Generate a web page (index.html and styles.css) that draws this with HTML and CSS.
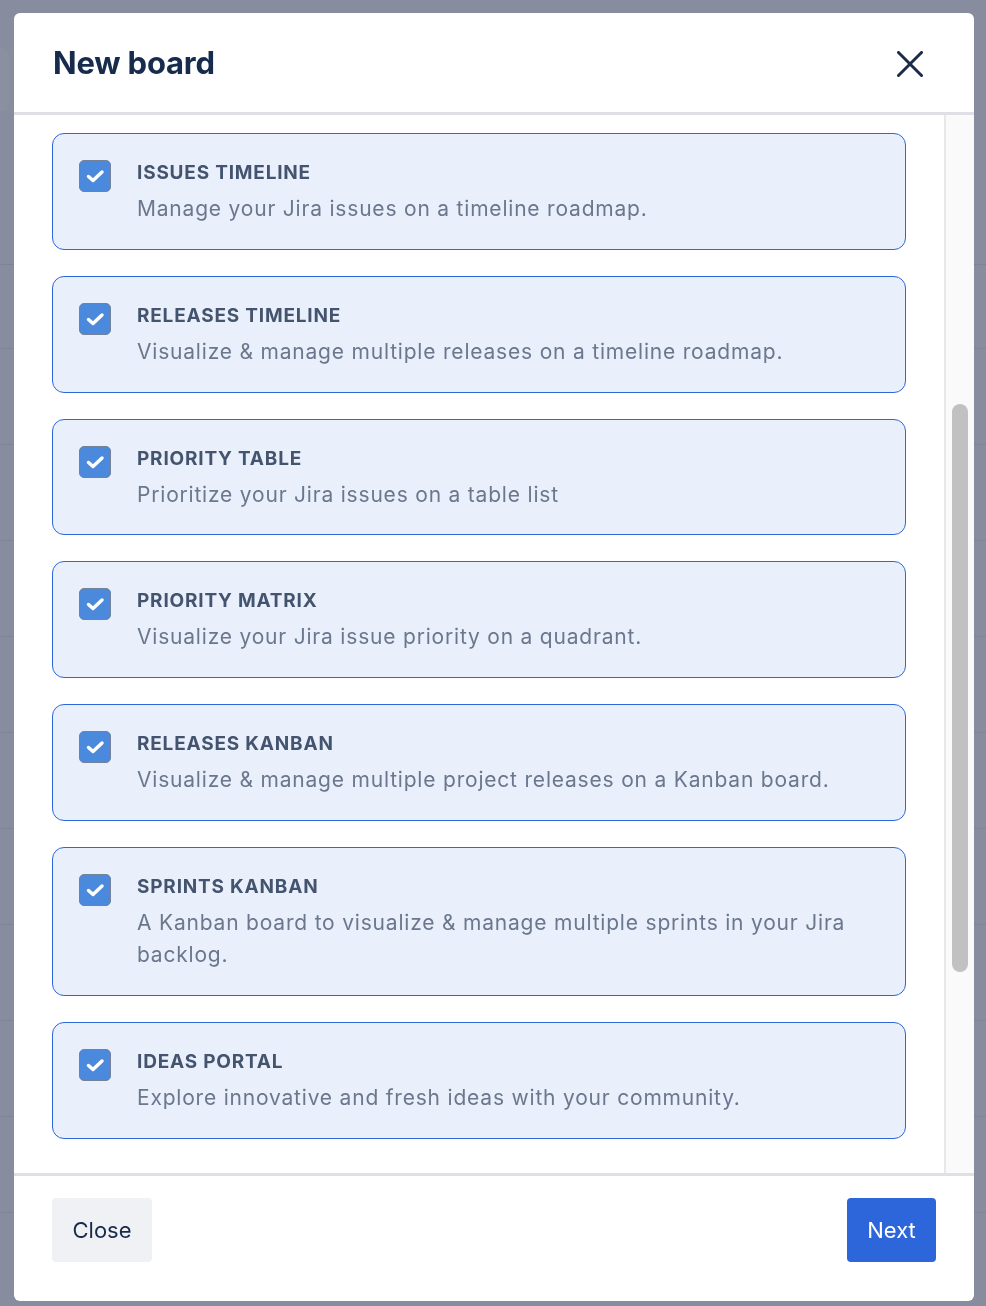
FILE: index.html
```html
<!DOCTYPE html>
<html lang="en">
<head>
  <meta charset="UTF-8">
  <title>New board</title>
  <link rel="stylesheet" href="styles.css">
</head>
<body>
  <div class="bg-page">
    <div class="bg-tab"></div>
    <div class="bg-rows">
      <div class="bg-row first"></div>
      <div class="bg-row short"></div>
      <div class="bg-row"></div>
      <div class="bg-row"></div>
      <div class="bg-row"></div>
      <div class="bg-row"></div>
      <div class="bg-row"></div>
      <div class="bg-row"></div>
      <div class="bg-row"></div>
      <div class="bg-row"></div>
      <div class="bg-row"></div>
    </div>
  </div>

  <div class="overlay">
    <div class="modal">
      <div class="modal-header">
        <h1>New board</h1>
        <button class="icon-btn" aria-label="Close">
          <svg width="26" height="26" viewBox="0 0 26 26"><path d="M1.5 1.5 L24.5 24.5 M24.5 1.5 L1.5 24.5" stroke="#1c2a4c" stroke-width="3" stroke-linecap="round" fill="none"/></svg>
        </button>
      </div>

      <div class="modal-body">
        <div class="card-list">
          <label class="card">
            <span class="check"><svg width="32" height="32" viewBox="0 0 32 32"><path d="M9.5 16.5 L14 20.5 L23 12" stroke="#fff" stroke-width="3.5" stroke-linecap="round" stroke-linejoin="round" fill="none"/></svg></span>
            <span class="card-text">
              <span class="card-title">Issues timeline</span>
              <span class="card-desc">Manage your Jira issues on a timeline roadmap.</span>
            </span>
          </label>
          <label class="card">
            <span class="check"><svg width="32" height="32" viewBox="0 0 32 32"><path d="M9.5 16.5 L14 20.5 L23 12" stroke="#fff" stroke-width="3.5" stroke-linecap="round" stroke-linejoin="round" fill="none"/></svg></span>
            <span class="card-text">
              <span class="card-title">Releases timeline</span>
              <span class="card-desc">Visualize &amp; manage multiple releases on a timeline roadmap.</span>
            </span>
          </label>
          <label class="card">
            <span class="check"><svg width="32" height="32" viewBox="0 0 32 32"><path d="M9.5 16.5 L14 20.5 L23 12" stroke="#fff" stroke-width="3.5" stroke-linecap="round" stroke-linejoin="round" fill="none"/></svg></span>
            <span class="card-text">
              <span class="card-title">Priority table</span>
              <span class="card-desc">Prioritize your Jira issues on a table list</span>
            </span>
          </label>
          <label class="card">
            <span class="check"><svg width="32" height="32" viewBox="0 0 32 32"><path d="M9.5 16.5 L14 20.5 L23 12" stroke="#fff" stroke-width="3.5" stroke-linecap="round" stroke-linejoin="round" fill="none"/></svg></span>
            <span class="card-text">
              <span class="card-title">Priority matrix</span>
              <span class="card-desc">Visualize your Jira issue priority on a quadrant.</span>
            </span>
          </label>
          <label class="card">
            <span class="check"><svg width="32" height="32" viewBox="0 0 32 32"><path d="M9.5 16.5 L14 20.5 L23 12" stroke="#fff" stroke-width="3.5" stroke-linecap="round" stroke-linejoin="round" fill="none"/></svg></span>
            <span class="card-text">
              <span class="card-title">Releases kanban</span>
              <span class="card-desc">Visualize &amp; manage multiple project releases on a Kanban board.</span>
            </span>
          </label>
          <label class="card">
            <span class="check"><svg width="32" height="32" viewBox="0 0 32 32"><path d="M9.5 16.5 L14 20.5 L23 12" stroke="#fff" stroke-width="3.5" stroke-linecap="round" stroke-linejoin="round" fill="none"/></svg></span>
            <span class="card-text">
              <span class="card-title">Sprints kanban</span>
              <span class="card-desc">A Kanban board to visualize &amp; manage multiple sprints in your Jira backlog.</span>
            </span>
          </label>
          <label class="card">
            <span class="check"><svg width="32" height="32" viewBox="0 0 32 32"><path d="M9.5 16.5 L14 20.5 L23 12" stroke="#fff" stroke-width="3.5" stroke-linecap="round" stroke-linejoin="round" fill="none"/></svg></span>
            <span class="card-text">
              <span class="card-title">Ideas portal</span>
              <span class="card-desc">Explore innovative and fresh ideas with your community.</span>
            </span>
          </label>
        </div>
        <div class="scroll-track">
          <div class="scroll-thumb"></div>
        </div>
      </div>

      <div class="modal-footer">
        <button class="btn btn-subtle">Close</button>
        <button class="btn btn-primary">Next</button>
      </div>
    </div>
  </div>
</body>
</html>
```

FILE: styles.css
```css
body { margin: 0; background: #878d9e; font-family: Inter, 'Noto Sans', Arial, sans-serif; overflow: hidden; }

/* page behind the dialog */
.bg-page { position: relative; height: 1306px; }
.bg-tab { position: absolute; left: 0; top: 48px; width: 9px; height: 63px; background: #8a90a0; border-radius: 0 6px 6px 0; }
.bg-rows { display: flex; flex-direction: column; }
.bg-row { height: 95px; border-bottom: 1px solid #7e8495; }
.bg-row.first { height: 264px; }
.bg-row.short { height: 83px; }

.overlay { position: fixed; inset: 0; padding: 13px 12px 5px 14px; }
.modal { width: 960px; height: 1288px; background: #fff; border-radius: 6px; display: flex; flex-direction: column; overflow: hidden; }

.modal-header { height: 99px; flex: none; display: flex; align-items: center; justify-content: space-between; padding: 0 51px 0 39px; border-bottom: 3px solid #dfe0e5; }
.modal-header h1 { margin: 0; font-size: 31px; font-weight: 700; color: #172b4d; letter-spacing: -0.2px; }
.icon-btn { background: none; border: none; padding: 0; width: 26px; height: 26px; cursor: pointer; display: flex; margin-top: 2px; }

.modal-body { flex: 1; display: flex; min-height: 0; }
.card-list { flex: 1; padding: 18px 38px 0; display: flex; flex-direction: column; gap: 26px; overflow: hidden; }
.card { display: flex; align-items: flex-start; gap: 26px; padding: 26px 26px 23.8px 26px; border: 1px solid #2e66db; border-radius: 12px; background: #e9f0fc; cursor: pointer; }
.check { flex: none; width: 30px; height: 30px; background: #4a89dc; border: 1px solid #73819a; border-radius: 5px; display: flex; }
.check svg { margin: -1px; }
.card-text { display: flex; flex-direction: column; }
.card-title { font-size: 19px; line-height: 26px; font-weight: 700; text-transform: uppercase; color: #44546f; letter-spacing: 0.8px; }
.card-desc { margin-top: 7px; font-size: 21px; line-height: 32px; color: #6b778c; letter-spacing: 0.8px; }

.scroll-track { flex: none; width: 22px; padding: 289px 6px 0 0; background: #fafafa; border-left: 2px solid #e8e8e8; display: flex; flex-direction: column; align-items: flex-end; }
.scroll-thumb { width: 16px; height: 568px; background: #c1c1c1; border-radius: 8px; }

.modal-footer { height: 128px; flex: none; box-sizing: border-box; display: flex; justify-content: space-between; align-items: flex-start; padding: 22px 38px 0; border-top: 3px solid #dfe0e5; }
.btn { height: 64px; border: none; border-radius: 4px; font-family: Inter, Arial, sans-serif; font-size: 22px; cursor: pointer; }
.btn-subtle { width: 100px; background: #f0f1f4; color: #172b4d; }
.btn-primary { width: 89px; background: #2d65db; color: #fff; }
```
